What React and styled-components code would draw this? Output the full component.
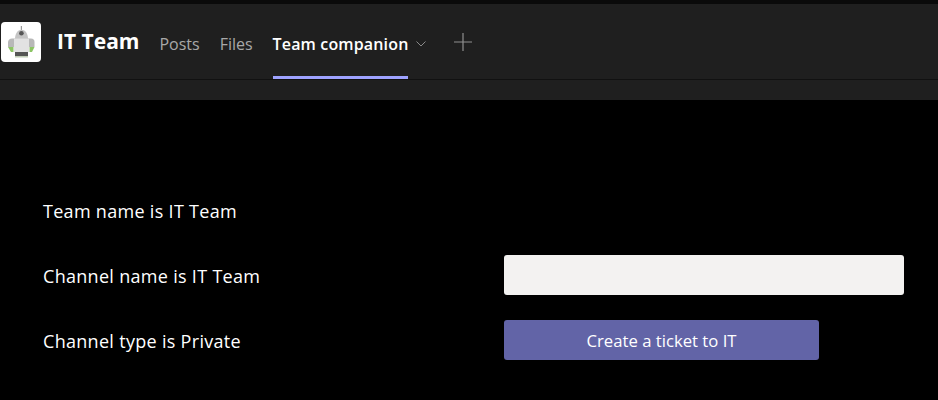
import React from 'react';
import styled, { createGlobalStyle } from 'styled-components';

const GlobalStyle = createGlobalStyle`
  html, body {
    margin: 0;
    padding: 0;
    background: #000;
  }
  body {
    font-family: "Open Sans", "Noto Sans", sans-serif;
    width: 938px;
    height: 400px;
    overflow: hidden;
  }
`;

const Page = styled.div`
  width: 938px;
  height: 400px;
  display: flex;
  flex-direction: column;
  background: #000;
`;

const TopStrip = styled.div`
  height: 4px;
  background: #0a0a0a;
`;

const Header = styled.header`
  height: 76px;
  box-sizing: border-box;
  display: flex;
  align-items: stretch;
  padding-left: 1px;
  background: #1f1f1f;
  border-bottom: 1px solid #111;
`;

const Logo = styled.div`
  width: 40px;
  height: 40px;
  margin-top: 18px;
  border-radius: 4px;
  background: #fff;
  overflow: hidden;
`;

const TeamName = styled.h1`
  margin: 21px 0 0 16px;
  font-size: 21px;
  line-height: 32px;
  font-weight: 700;
  color: #fff;
`;

const Tabs = styled.nav`
  display: flex;
  margin-left: 20px;
  gap: 20px;
`;

const Tab = styled.div`
  position: relative;
  padding-top: 26px;
  font-size: 16px;
  line-height: 28px;
  letter-spacing: ${props => (props.$active ? '0.15px' : '0')};
  font-weight: ${props => (props.$active ? 600 : 400)};
  color: ${props => (props.$active ? '#fff' : '#a8a8a8')};

  ${props => props.$active && `
    &::after {
      content: '';
      position: absolute;
      left: 0;
      right: 0;
      bottom: 0;
      height: 3px;
      background: #9ea2ff;
    }
  `}
`;

const Chevron = styled.svg`
  width: 10px;
  height: 6px;
  margin: 37px 0 0 8px;
`;

const Plus = styled.svg`
  width: 18px;
  height: 18px;
  margin: 29px 0 0 28px;
`;

const SubStrip = styled.div`
  height: 20px;
  background: #1f1f1f;
`;

const Content = styled.main`
  flex: 1;
  margin-left: 1px;
  padding: 90px 34px 0 42px;
  background: #000;
  display: grid;
  grid-template-columns: 461px 1fr;
  grid-auto-rows: 40px;
  row-gap: 25px;
  align-items: start;
`;

const Label = styled.div`
  height: 40px;
  font-size: 18px;
  line-height: 42px;
  letter-spacing: 0.3px;
  color: #fff;
`;

const TextBox = styled.input`
  width: 400px;
  height: 40px;
  box-sizing: border-box;
  border: 0;
  border-radius: 3px;
  background: #f3f2f1;
  outline: none;
`;

const Button = styled.button`
  width: 315px;
  height: 40px;
  border: 0;
  border-radius: 3px;
  padding: 0;
  background: #6264a7;
  color: #fff;
  font-family: inherit;
  font-size: 16.7px;
`;

const RobotSvg = styled.svg`
  display: block;
  width: 40px;
  height: 40px;
  filter: blur(0.6px);
`;

function RobotLogo() {
  return (
    <RobotSvg viewBox="0 0 40 40">
      <rect x="19.8" y="4" width="1.2" height="4" fill="#9a9a9a" />
      <path d="M14 17 C14 4.5 27 4.5 27 17 Z" fill="#c4c4c4" />
      <circle cx="20.4" cy="11.3" r="2.3" fill="#555" />
      <path d="M7 20 Q7.5 16.5 11 16.5 H30 Q33.5 16.5 33.5 20 V25 H7 Z" fill="#b8b8b8" />
      <rect x="13" y="16.5" width="15" height="13.5" fill="#e2e2e2" />
      <path d="M7 25 H12.5 V30 H10 Z" fill="#8cc464" />
      <path d="M33.5 25 H28.5 V30 H31 Z" fill="#8cc464" />
      <rect x="14" y="30" width="13" height="4" fill="#555" />
      <rect x="14" y="34" width="13" height="1.5" fill="#c0ccb6" />
    </RobotSvg>
  );
}

export default function App() {
  return (
    <Page>
      <GlobalStyle />
      <TopStrip />
      <Header>
        <Logo><RobotLogo /></Logo>
        <TeamName>IT Team</TeamName>
        <Tabs>
          <Tab>Posts</Tab>
          <Tab>Files</Tab>
          <Tab $active>Team companion</Tab>
        </Tabs>
        <Chevron viewBox="0 0 10 6">
          <path d="M0.5 0.5 L5 5 L9.5 0.5" fill="none" stroke="#8a8a8a" strokeWidth="1" />
        </Chevron>
        <Plus viewBox="0 0 18 18">
          <path d="M9 0 V18 M0 9 H18" fill="none" stroke="#8f8f8f" strokeWidth="1.2" />
        </Plus>
      </Header>
      <SubStrip />
      <Content>
        <Label>Team name is IT Team</Label>
        <div />
        <Label>Channel name is IT Team</Label>
        <TextBox />
        <Label>Channel type is Private</Label>
        <Button>Create a ticket to IT</Button>
      </Content>
    </Page>
  );
}
